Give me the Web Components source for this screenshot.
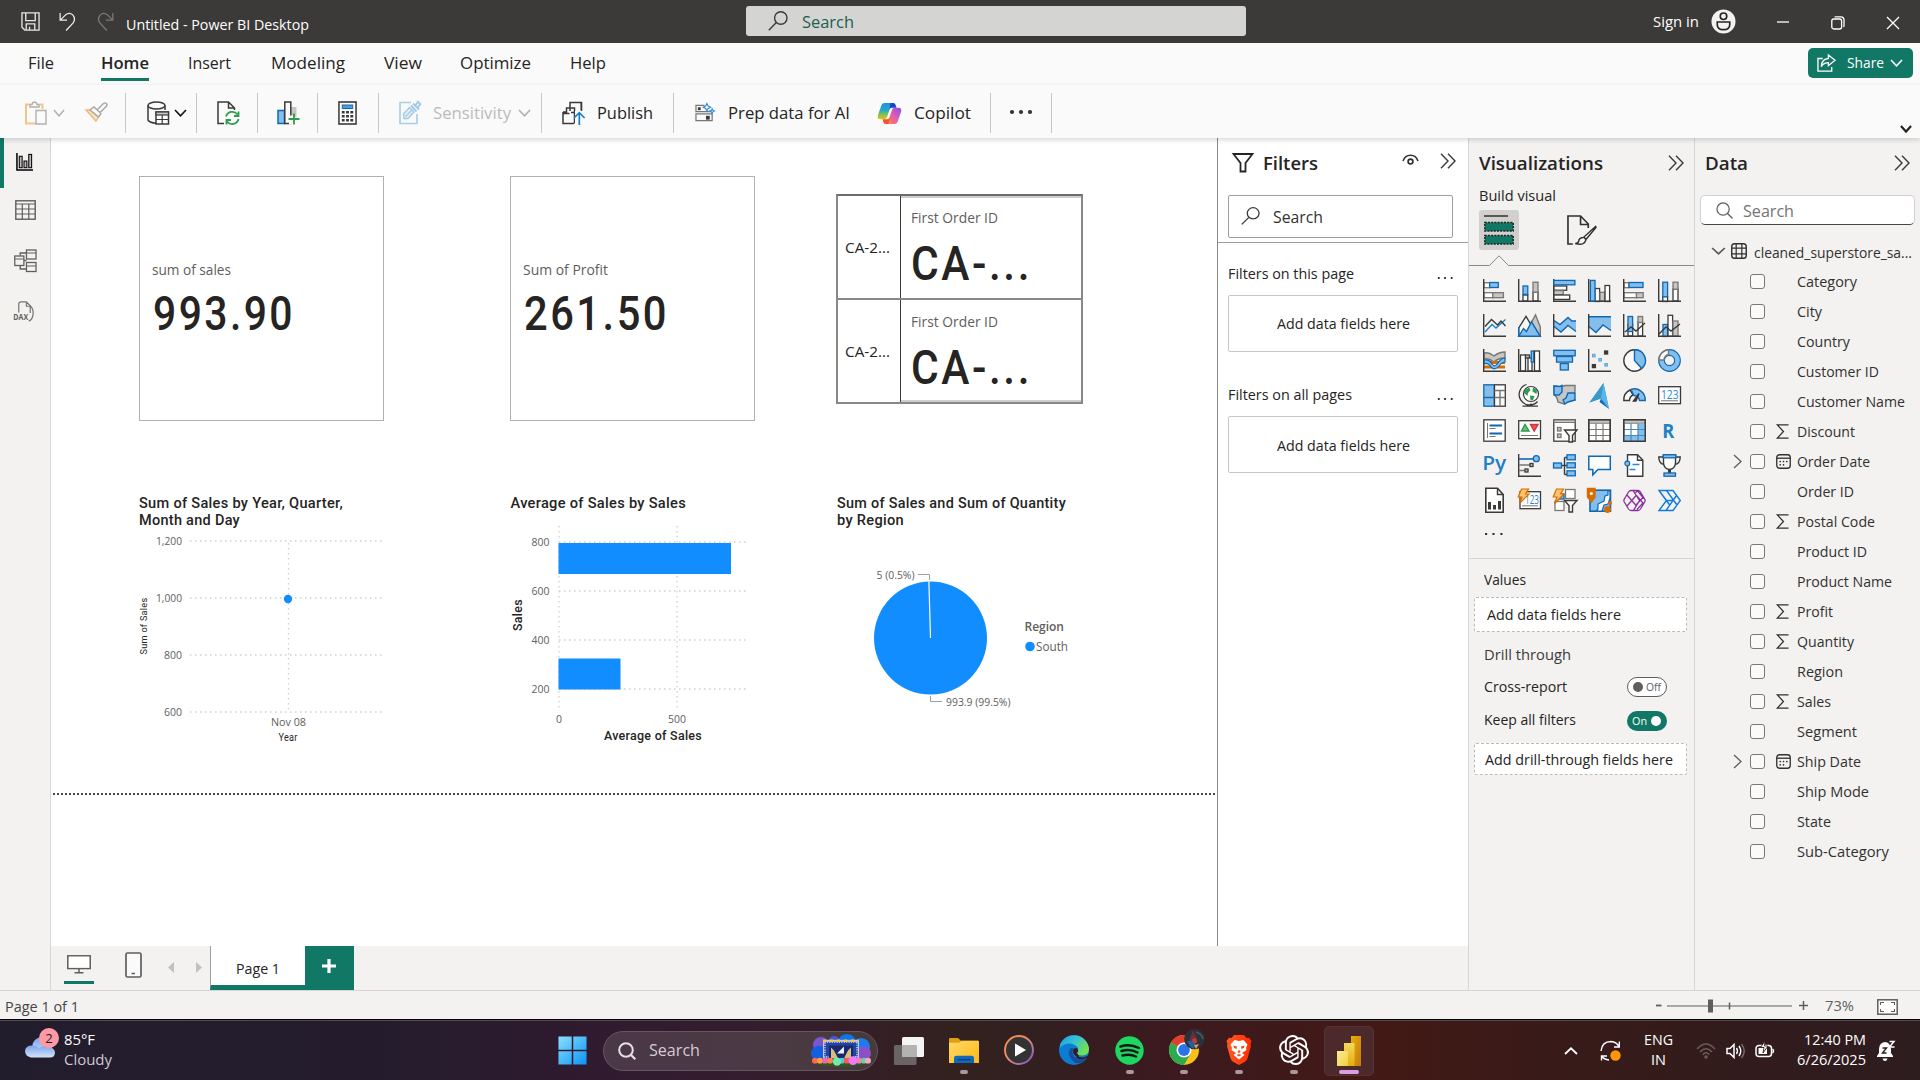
<!DOCTYPE html>
<html lang="en">
<head>
<meta charset="utf-8">
<title>Untitled - Power BI Desktop</title>
<style>
html,body{margin:0;padding:0;width:1920px;height:1080px;overflow:hidden;background:#f3f2f1;font-family:"Open Sans","Noto Sans",sans-serif;color:#252423}
</style>
</head>
<body>
<pbi-app></pbi-app>
<script>
const SANS = '"Open Sans","Noto Sans",sans-serif';
const DIN = 'Roboto,"Open Sans",sans-serif';

/* ---------- layout helpers ---------- */
const flow = (dir, start, items) => {
  let p = start;
  return items.map(([at, len, html, css = '']) => {
    const m = +(at - p).toFixed(2);
    p = at + len;
    return dir === 'x'
      ? `<div class="cx" style="margin-left:${m}px;width:${len}px;${css}">${html}</div>`
      : `<div class="cy" style="margin-top:${m}px;height:${len}px;${css}">${html}</div>`;
  }).join('');
};
const hrow = (start, items) => flow('x', start, items);
const vcol = (start, items) => flow('y', start, items);
const T = (text, w, size = 15, color = '#252423', weight = 400, din = false) =>
  `<ui-text w="${w}" size="${size}" color="${color}" weight="${weight}"${din ? ' din' : ''}>${text}</ui-text>`;
const I = (name, w, h = w) => `<ui-icon name="${name}" w="${w}" h="${h}"></ui-icon>`;
const BASE = `<style>:host{display:block;box-sizing:border-box}*{box-sizing:border-box}
.cx{flex:none;display:flex;align-items:center;height:100%}.cy{flex:none;display:flex;align-items:center}
.row{display:flex;align-items:center}.col{display:flex;flex-direction:column}</style>`;

/* ---------- icon shapes ---------- */
const K = '#3b3a39', BF = '#83beec', BS = '#1068b3', GF = '#c8c6c4', GS = '#797775';
const r = (x, y, w, h, f = 'none', s = K, sw = 1.3) => `<rect x="${x}" y="${y}" width="${w}" height="${h}" fill="${f}" stroke="${s}" stroke-width="${sw}"/>`;
const p = (d, s = K, f = 'none', sw = 1.4, x = '') => `<path d="${d}" stroke="${s}" fill="${f}" stroke-width="${sw}" ${x}/>`;
const AX = p('M.7 0V22.3H23', K, 'none', 1.4);
const tx = (x, y, s, f, w, t, l) => `<text x="${x}" y="${y}" font-family='${SANS.replace(/"/g, '')}' font-size="${s}" font-weight="${w}" fill="${f}"${l ? ` textLength="${l}" lengthAdjust="spacingAndGlyphs"` : ''}>${t}</text>`;
const bolt = p('M3.5 0H10.5L7.5 5H11L1.5 14.5L4 8H.2Z', '#d86c00', '#ffc36b', 1.2);

const VIZ = {
  v0: r(1, 3.7, 6, 5, '#fff', GS) + r(6.7, 3.5, 8.6, 5, BF, BS) + r(1, 13.7, 9, 5, '#fff', GS) + r(9.8, 13.7, 10.6, 5, GF, GS) + AX,
  v1: r(5, 16, 4.8, 6, '#fff') + r(5, 7, 4.8, 8.4, BF, BS) + r(15, 13, 5, 9, '#fff') + r(15, 3.2, 5, 10, GF, GS) + AX,
  v2: r(.7, 7, 13, 4.2, '#fff') + r(.7, 11.6, 9.5, 4.2, GF, GS) + r(.7, 16, 16, 4.4, '#fff') + p('M.7 0V22.3H23') + r(.9, 1.4, 21, 4.4, BF, BS),
  v3: r(7, 9.5, 4.6, 13, '#fff') + r(12, 13.3, 4.6, 9, GF, GS) + r(17, 6.5, 4.6, 16, '#fff') + p('M.7 0V22.3H23') + r(2.4, 1.4, 4.6, 20.6, BF, BS),
  v4: r(1, 3.7, 5, 5, '#fff', GS) + r(6, 3.5, 14, 5, BF, BS) + r(1, 13.7, 12.6, 5, '#fff', GS) + r(13.4, 13.7, 6.8, 5, GF, GS) + AX,
  v5: r(4.8, 17.5, 4.8, 5, '#fff') + r(4.8, 3.2, 4.8, 14.6, BF, BS) + r(15, 10, 5, 12, '#fff') + r(15, 3.2, 5, 7, GF, GS) + AX,
  v6: p('M2 18L9 10.5L13 14L22.5 5.5', '#1a86c8') + p('M2 12.5L8.5 5.5L14.5 11L18 7L22.5 12', K) + AX,
  v7: p('M11.5 12L17.5 .8L22.3 13V22Z', GS, GF) + p('M.7 14L8 2.4L14 12.5L8 22H.7Z', K, '#fafafa') + p('M.7 22.3L5.5 14.5L8.5 17.5L13.5 7.8L22.3 22.3Z', BS, BF) + p('M.7 13V22', BS),
  v8: `<path d="M1 6.500L7 10.500L15 3.500L19 7H23V17L15 11.500L8 18L1 12.500Z" fill="${BF}"/>` + p('M1 6.500L7 10.500L15 3.500L19 7H23', BS) + p('M1 12.500L8 18L15 11.500L23 17.500', BS) + AX,
  v9: `<path d="M1 3H23V17L15 11L8 18.500L1 13Z" fill="${BF}"/>` + p('M1 2.700H23M1 12.500L8 18.500L15 11L23 16.500', BS) + AX,
  v10: r(5, 10, 4.600, 12, '#fff') + r(5, 2.500, 4.600, 15, BF, BS) + r(15, 8, 4.600, 14, '#fff') + r(15, 2.500, 4.600, 6, GF, GS) + p('M2 18L8 13L13 17L22 9') + AX,
  v11: r(5, 10.500, 4.600, 12, BF, BS) + r(10, 1.300, 4.600, 21, '#fff') + r(15, 7, 5, 15, GF, GS) + p('M1 20L8 13L13 17L22 10') + AX,
  v12: p('M1 4Q6 3 11 7Q16 3 22 3V9Q15 9 11 13Q6 9 1 10Z', GS, GF) + p('M1 18H22M1 13.500H22', '#d86c00', 'none', 3) + p('M1 11Q6 10 9 15Q12 19 15 14Q18 9 22 9V13Q19 13 16 17Q12 22 8 18Q5 13 1 15Z', BS, BF, 1.200) + AX,
  v13: r(2.500, 6, 5, 16, '#fff') + r(7.500, 6, 4, 3, GF, K) + r(10, 9, 4, 13, '#fff') + r(13.200, 2, 2.600, 11, BF, BS) + r(16.500, 2, 5, 20, '#fff') + AX,
  v14: r(.8, 1.300, 21.400, 5.500, BF, BS) + r(3.500, 7.500, 16, 5.600, BF, BS) + r(7.300, 14.500, 8, 6.500, BF, BS),
  v15: AX + r(4.500, 5.300, 2.600, 2.600, BF, '#5fa8e0', 1) + r(10.800, 9.500, 2.600, 2.600, BF, '#5fa8e0', 1) + r(16.800, 14.500, 2.600, 2.600, BF, '#5fa8e0', 1) + r(16.600, 2, 3, 3, K) + r(4.400, 15.600, 3, 3, K),
  v16: `<circle cx="11.500" cy="11.500" r="10.700" fill="#fafafa" stroke="${K}" stroke-width="1.400"/>` + p('M11.500 .8A10.700 10.700 0 0 1 18.800 19.500L11.500 11.500Z', BS, BF),
  v17: `<circle cx="11.500" cy="11.500" r="8" fill="none" stroke="${BS}" stroke-width="6.800"/><circle cx="11.500" cy="11.500" r="8" fill="none" stroke="${BF}" stroke-width="4.600"/>` + p('M.8 11A10.700 10.700 0 0 1 10.500 .8V5.500A6 6 0 0 0 6 11Z', GS, '#fafafa'),
  v18: r(.8, .8, 10.500, 21.400, BF, BS) + p('M.8 13.500H11.300', BS) + r(11.500, .8, 10.800, 21.400, '#fafafa') + p('M11.500 6.500H22M11.500 13.500H22M17 6.500V13.500M17 13.500V22', GS),
  v19: `<circle cx="13" cy="10" r="7.500" fill="#fff" stroke="${K}" stroke-width="1.200"/>` + p('M7 6L11 3.500L12.500 6L10 9L9.500 12L6 9ZM15 3.500L19 6L18.500 10L14.500 7.500ZM12 11.500L16.500 12L15 16L12.500 16.500Z', 'none', '#2f9b4e') + p('M8.500 .5A10.500 10.500 0 1 0 19.500 17.500M13 19.500V22M4.500 22.200H20', K, 'none', 1.300),
  v20: p('M1 2L8 3L12 1.500H22V7L20 12L22 16L13 18L11 20L5 18L4 14L1 10Z', GS, GF) + p('M1 2L7 2.500L9 1.500V8L6 11H1ZM22 9L15 9L13 14L10 16L12 20L15 18L22 16Z', BS, BF),
  v21: `<path d="M15.500 -1L1.500 18.500L13 14.500L21 25Z" fill="#3a98cf"/><path d="M15.500 -1L13 14.500L1.500 18.500Z" fill="#3b9ac9"/><path d="M15.500 -1L21 25L13 14.500Z" fill="#57b6e8"/><path d="M21 25L11.500 18L13 14.500Z" fill="#0f6cbd"/>`,
  v22: p('M.8 16.500A10.700 11 0 0 1 7 6L10 11Q6.500 12.500 6.500 16.500Z', K, '#fafafa') + p('M8 5.500A10.700 11 0 0 1 22.200 16.500H16.500Q16 12.500 11 11.500Z', BS, BF) + p('M10.500 17L16 9.500L13 17Z', K, K),
  v23: r(.7, 2.700, 21.800, 17, '#fff') + tx(3, 15, 12.500, '#2b88d8', 400, '123', 17.500) + p('M3 16.800H20', GS, 'none', 1),
  v24: r(.8, .8, 21.400, 21.400, '#fff') + p('M4.500 4V19', GS, 'none', 1) + p('M6.500 6.500H19M6.500 14.500H19', '#1068b3', 'none', 2) + p('M6.500 9.500H12.500M6.500 17.500H12.500', GS, 'none', 1.200),
  v25: r(.7, 1.700, 21.800, 18, '#fff') + p('M3.500 12L7 5.500L11 12Z', '#2f9b4e', '#6cc07f') + p('M12.500 5.500H20L16.200 12Z', '#d13438', '#e8595c') + p('M3 16.500H20', GS, 'none', 1),
  v26: r(.8, .8, 21.400, 21.400, '#fff') + r(1, 1, 21, 2.500, GF, GS, 1) + r(4.500, 8.500, 3.500, 3.500, GF, GS) + r(4.500, 15, 3.500, 3.500, GF, GS) + p('M11.500 11H24L19.500 16.500V23H16V16.500Z', K, '#fafafa'),
  v27: r(.8, .8, 21.400, 21.400, '#fff') + r(1, 1, 21, 3.200, GF, GS, 1) + p('M8 4.500V22M15 4.500V22M1 10.500H22M1 16.500H22', GS, 'none', 1.200) + p('M.8 .8V22.200H22.200V.8Z'),
  v28: r(.8, .8, 21.400, 21.400, '#fff') + r(1, 1, 21, 3.200, GF, GS, 1) + `<path d="M15 4.500H22V22H1V16H15Z" fill="${BF}"/>` + p('M8 4.500V22M15 4.500V22M1 10.500H22M1 16.500H22', '#4a86bd', 'none', 1.200) + p('M.8 .8V22.200H22.200V.8Z'),
  v29: tx(4.200, 18.600, 20, '#2180c3', 700, 'R', 12),
  v30: tx(-.8, 16.200, 19.500, '#2180c3', 600, 'Py', 24),
  v31: AX + p('M1 5H15', BS, 'none', 1.600) + p('M1 11H12M1 16.500H7', GS, 'none', 1.400) + `<circle cx="18.300" cy="4.700" r="3" fill="${BF}" stroke="${BS}" stroke-width="1.300"/>` + r(12, 9.500, 3, 3, GF, K) + r(7, 15, 3, 3, GF, K),
  v32: p('M8 11.500H14M11.500 3.500V20.500M11.500 3.500H15M11.500 20.500H15', K) + r(.5, 9, 8, 5, BF, BS) + r(14, .8, 8.300, 5, BF, BS) + r(14, 8.800, 8.300, 5, BF, BS) + r(14, 16.800, 8.300, 5, BF, BS),
  v33: p('M.8 2.300H22.300V15.500H10L4.800 20.800V15.500H.8Z', BS, '#fff', 1.500),
  v34: p('M4.500 7V.8H14.500L19.800 6V22.200H4.500V12', K, '#fff') + p('M14.500 .8V6.200H19.800', K) + `<circle cx="4.300" cy="9.500" r="2.400" fill="${BF}" stroke="${BS}" stroke-width="1.200"/>` + p('M9.500 10.500H16.500M6.500 15.500H12.500', '#2b88d8', 'none', 1.300),
  v35: p('M5.500 3H.8Q.8 10 6.500 10.500M17.500 3H22.200Q22.200 10 16.500 10.500', K) + p('M5.500 1V9Q6 15 11.500 15.500Q17 15 17.500 9V1Z', K, '#fff') + p('M11.500 15.500V20', K, 'none', 3) + r(5.200, .8, 12.600, 3, BF, BS) + r(6, 19, 11.500, 3.200, BF, BS),
  v36: p('M2.800 -.700H14.500L20.200 5.500V23.200H2.800Z', K, '#fff', 1.600) + p('M14.500 -.500V5.500H20.200', K) + p('M6.500 20.500V13M11.500 20.500V16M16.500 20.500V12', K, 'none', 3),
  v37: r(2, 2.700, 20.500, 17, '#fff') + tx(7, 15, 12.500, '#2b88d8', 400, '123', 14) + p('M4 16.800H20', GS, 'none', 1) + bolt,
  v38: r(12.500, .5, 9.500, 9, '#fff', GS) + r(2, 12.500, 9, 9, '#fff', GS) + r(6, 5, 5, 5, BF, BS) + p('M11.500 11.500H24L19.500 16.500V23H16V16.500Z', K, '#fafafa') + bolt,
  v39: r(2, 1.200, 20.500, 21, BF, BS, 1.600) + p('M20 2L20 6L17 7L16 12L10 15V20L8 22H14L16 16L20 15L22 9V2Z', BS, '#fff', 1.200) + p('M3.300 13L-.5 8V-.5H7V8Z', '#d86c00', '#d86c00') + `<circle cx="3.300" cy="4.500" r="1.500" fill="#fff"/><circle cx="19.500" cy="20.500" r="3.400" fill="#d86c00"/><circle cx="22" cy="14" r="2" fill="#d86c00"/>`,
  v40: p('M8 1.500Q6.500 1.500 5.500 3L1.200 10.200Q.5 11.500 1.200 12.800L5.500 20Q6.500 21.500 8 21.500H15Q16.500 21.500 17.500 20L21.800 12.800Q22.500 11.500 21.800 10.200L17.500 3Q16.500 1.500 15 1.500ZM10 1.500L16.500 11.500L10.500 21.500M4 6L13.500 17M4 17L13.500 6M12.500 4Q14 1.500 15.500 3L20 8.500L13.500 15.500M13.500 6.500L20 14L14 20.500', '#8a2f9e', 'none', 1.300),
  v41: p('M1 1.500H15L22.300 11.500L15 21.500H1L8.500 11.500ZM8.500 1.500L19 16M1 1.500L12 16.500M8.500 11.500H15L8 21.500M15 11.500L18.500 6.500', '#0f7bdc', 'none', 1.400),
};

const GPT = 'M22.2819 9.8211a5.9847 5.9847 0 0 0-.5157-4.9108 6.0462 6.0462 0 0 0-6.5098-2.9A6.0651 6.0651 0 0 0 4.9807 4.1818a5.9847 5.9847 0 0 0-3.9977 2.9 6.0462 6.0462 0 0 0 .7427 7.0966 5.98 5.98 0 0 0 .511 4.9107 6.051 6.051 0 0 0 6.5146 2.9001A5.9847 5.9847 0 0 0 13.2599 24a6.0557 6.0557 0 0 0 5.7718-4.2058 5.9894 5.9894 0 0 0 3.9977-2.9001 6.0557 6.0557 0 0 0-.7475-7.0729zm-9.022 12.6081a4.4755 4.4755 0 0 1-2.8764-1.0408l.1419-.0804 4.7783-2.7582a.7948.7948 0 0 0 .3927-.6813v-6.7369l2.02 1.1686a.071.071 0 0 1 .038.052v5.5826a4.504 4.504 0 0 1-4.4945 4.4944zm-9.6607-4.1254a4.4708 4.4708 0 0 1-.5346-3.0137l.142.0852 4.783 2.7582a.7712.7712 0 0 0 .7806 0l5.8428-3.3685v2.3324a.0804.0804 0 0 1-.0332.0615L9.74 19.9502a4.4992 4.4992 0 0 1-6.1408-1.6464zM2.3408 7.8956a4.485 4.485 0 0 1 2.3655-1.9728V11.6a.7664.7664 0 0 0 .3879.6765l5.8144 3.3543-2.0201 1.1685a.0757.0757 0 0 1-.071 0l-4.8303-2.7865A4.504 4.504 0 0 1 2.3408 7.872zm16.5963 3.8558L13.1038 8.364 15.1192 7.2a.0757.0757 0 0 1 .071 0l4.8303 2.7913a4.4944 4.4944 0 0 1-.6765 8.1042v-5.6772a.79.79 0 0 0-.407-.667zm2.0107-3.0231l-.142-.0852-4.7735-2.7818a.7759.7759 0 0 0-.7854 0L9.409 9.2297V6.8974a.0662.0662 0 0 1 .0284-.0615l4.8303-2.7866a4.4992 4.4992 0 0 1 6.6802 4.66zM8.3065 12.863l-2.02-1.1638a.0804.0804 0 0 1-.038-.0567V6.0742a4.4992 4.4992 0 0 1 7.3757-3.4537l-.142.0805L8.704 5.459a.7948.7948 0 0 0-.3927.6813zm1.0976-2.3654l2.602-1.4998 2.6069 1.4998v2.9994l-2.5974 1.4997-2.6067-1.4997Z';

const ICONS = {
  ...VIZ,
  save: ['0 0 20 20', p('M1 1H19V19H4L1 16ZM5 1V9H15V1M5.500 19V12.500H14.500V19M9 19V15.500', '#e8e6e4', 'none', 1.400)],
  undo: ['0 0 18 20', p('M1.200 1V8.500H8.500M1.200 8.500L7 3Q11 0 14.500 3Q18 7 15 11.500L7.500 19.500', '#f0f0f0', 'none', 1.300)],
  redo: ['0 0 18 20', p('M16.800 1V8.500H9.500M16.800 8.500L11 3Q7 0 3.500 3Q0 7 3 11.500L10.500 19.500', '#7d7b79', 'none', 1.300)],
  magL: ['0 0 20 20', `<circle cx="12.800" cy="7" r="6.200" fill="none" stroke="currentColor" stroke-width="1.400"/>` + p('M8.300 11.500L.8 19.300', 'currentColor')],
  magR: ['0 0 18 18', `<circle cx="7.500" cy="7.500" r="6.500" fill="none" stroke="currentColor" stroke-width="1.300"/>` + p('M12.200 12.200L17.500 17.500', 'currentColor')],
  magT: ['0 0 18 18', `<circle cx="8" cy="8" r="6.800" fill="none" stroke="#e6e0e6" stroke-width="2"/>` + p('M13 13L17.300 17.300', '#e6e0e6', 'none', 2.200)],
  avatar: ['0 0 26 26', `<circle cx="13" cy="13" r="12.500" fill="#f3f2f1"/><circle cx="13" cy="7.500" r="3.400" fill="none" stroke="#252423" stroke-width="1.700"/>` + p('M6.500 13.500H19.500V16Q19.500 21.500 13 21.500Q6.500 21.500 6.500 16Z', '#252423', 'none', 1.700)],
  min: ['0 0 14 14', p('M1 7H13', '#fff', 'none', 1.300)],
  restore: ['0 0 14 14', `<rect x=".8" y="3" width="9.800" height="10" rx="2" fill="none" stroke="#fff" stroke-width="1.300"/>` + p('M3.500 1Q4 .8 5 .8H10Q13 .8 13 4V9.500Q13 10.500 12.500 11', '#fff', 'none', 1.300)],
  close: ['0 0 14 14', p('M1 1L13 13M13 1L1 13', '#fff', 'none', 1.300)],
  chev: ['0 0 13 8', p('M1 1L6.500 6.800L12 1', 'currentColor', 'none', 1.600)],
  chevB: ['0 0 13 8', p('M1 1L6.500 6.500L12 1', '#252423', 'none', 2.400)],
  chevR: ['0 0 9 15', p('M1 1L8 7.500L1 14', '#605e5c', 'none', 1.300)],
  dbl: ['0 0 16 16', p('M1 .8L8 8L1 15.200M8 .8L15 8L8 15.200', '#3b3a39', 'none', 1.400)],
  share: ['0 0 20 20', p('M6 5H1V19H15.500V14.500', '#fff') + p('M12 1L19 7L12 13V9.500Q7 9.500 4.500 14Q5 5.500 12 5Z', '#fff')],
  paste: ['0 0 22 24', p('M11 22.500H1V3.500H4.500M14.500 3.500H17.500V8', '#f3c489', 'none', 2) + p('M5 6V3.500H7Q7.500 1 9.500 1Q11.500 1 12 3.500H14V6Z', '#b3b0ad', '#fafafa') + p('M11 9.500H21V23H11Z', '#b3b0ad', '#fafafa')],
  brush: ['0 0 23 20', p('M1 8H5L13.500 15L11 19Z', '#f0b77f', '#fbe3c8') + p('M5 8L9 5L16 11.500L13.500 15ZM12 8L18.500 1.500Q20 .3 21.500 1.500Q22.500 3 21.500 4.200L15 10.500', '#a9a6a3', '#fafafa')],
  db: ['0 0 22 24', p('M18 9V4.500M1 4.500V19Q3 22 9 22.200', K, 'none', 1.500) + `<ellipse cx="9.500" cy="4.500" rx="8.500" ry="3.500" fill="none" stroke="${K}" stroke-width="1.500"/>` + r(9, 11, 12.500, 12, '#fff', K, 1.500) + r(9, 11, 12.500, 3, GF, K, 1.200) + p('M15.200 14V23M9 18.500H21.500', K, 'none', 1.200)],
  refresh: ['0 0 23 24', p('M7 22.500H1V1H11.500L17.500 7V9M11.500 1V7H17.500', K, 'none', 1.500) + p('M9 15.500A6.500 6.500 0 0 1 20.500 13.500M21.500 10.500V15H17M21.500 18A6.500 6.500 0 0 1 10 20.500M9.500 23.500V19H14', '#2f9b4e', 'none', 1.800)],
  addchart: ['0 0 23 24', r(13.500, 6, 6, 10, GF, 'none') + r(1, 9.500, 6.500, 13, BF, BS, 1.500) + r(7.800, 1, 6, 21.500, '#fafafa', K, 1.500) + `<rect x="12" y="14.500" width="4" height="9" fill="#fafafa"/>` + p('M17 12.500V23.500M11.500 18H22.500', '#2f9b4e', 'none', 1.800)],
  calc: ['0 0 20 24', r(1, 1, 18, 22, '#fff', K, 1.600) + r(4.500, 4, 11, 3.500, '#4ba0e0', BS, 1) + [4, 8.500, 13].map(x => [10, 14, 18].map(y => `<rect x="${x}" y="${y}" width="3" height="2.500" fill="${K}"/>`).join('')).join('')],
  sens: ['0 0 22 24', p('M12 1.500H1V22.500H18V13', '#a6cfe6', 'none', 1.700) + p('M4.500 13L10.500 6.500L15 11L9 17.500L5 17.500Z', '#9fcbe4', '#e2f0f8', 1.400) + p('M6.500 15.500L13 9', '#9fcbe4', 'none', 1.200) + p('M12 4.500L17.500 10.500M14 2.500L20 8.500M16 5L19 .8L21.300 3L18.500 7', '#9fcbe4', 'none', 1.900)],
  publish: ['0 0 23 24', p('M8 10V1.500H19.500V11M1 12.500H7.500M1 11V22.500H12M1 11H4.500V7H12.500V22.500M9 11.500H12.500', K, 'none', 1.500) + `<path d="M13 10H23V24H13Z" fill="#fafafa"/>` + p('M19.300 1.200V9', K, 'none', 1.500) + p('M17.300 24V12M12 17L17.300 11.700L22.600 17', '#1a80c8', 'none', 1.700)],
  prep: ['0 0 21 20', p('M10 2.500H1V9H13.500M1 11.500H18V18.500H1ZM1 9H18V7', GS, 'none', 1.300) + `<rect x="3" y="4.500" width="3" height="3" fill="${K}"/><rect x="11.500" y="13.500" width="4" height="4" fill="${K}"/>` + p('M12.500 .5L13.800 3.200L16.500 4.500L13.800 5.800L12.500 8.500L11.200 5.800L8.500 4.500L11.200 3.200ZM18 6L18.800 7.700L20.500 8.500L18.800 9.300L18 11L17.200 9.300L15.500 8.500L17.200 7.700Z', '#2b88d8', '#fafafa', 1.100)],
  copilot: ['0 0 24 24', `<defs><linearGradient id="a" x1="0" y1="0" x2="0" y2="1"><stop offset="0" stop-color="#1e8ee0"/><stop offset=".45" stop-color="#27a8c8"/><stop offset=".75" stop-color="#8cc63f"/><stop offset="1" stop-color="#f5b81c"/></linearGradient><linearGradient id="b" x1="1" y1="0" x2="0" y2="1"><stop offset="0" stop-color="#8a4fe0"/><stop offset=".45" stop-color="#d95bbd"/><stop offset=".75" stop-color="#fa6f6b"/><stop offset="1" stop-color="#ff9a55"/></linearGradient></defs><path d="M15.500 1H7.500Q5 1 4.200 3.500L.8 14Q0 18 3.500 18H7Q9 18 9.700 15.500L13 5Z" fill="url(#a)"/><path d="M13 1H15.500Q17.500 1 18 3.500L18.700 6H14Q12.500 6 12 8Z" fill="#1746c8"/><path d="M8.500 23H16.500Q19 23 19.800 20.500L23.200 10Q24 6 20.500 6H17Q15 6 14.300 8.500L11 19Z" fill="url(#b)"/><path d="M11 23H8.500Q6.500 23 6 20.500L5.300 18H10Q11.500 18 12 16Z" fill="#f0532f"/>`],
  dots3: ['0 0 24 6', `<circle cx="3" cy="3" r="2.100" fill="#323130"/><circle cx="12" cy="3" r="2.100" fill="#323130"/><circle cx="21" cy="3" r="2.100" fill="#323130"/>`],
  dotsS: ['0 0 18 4', `<rect x="1" y="1" width="2" height="2" fill="#323130"/><rect x="8" y="1" width="2" height="2" fill="#323130"/><rect x="15.500" y="1" width="2" height="2" fill="#323130"/>`],
  report: ['0 0 18 19', p('M1 0V18H18', '#000', 'none', 1.600) + r(3.500, 3.500, 3, 12, '#bbb', '#111', 1.200) + r(8.500, 8.500, 3, 7, '#bbb', '#111', 1.200) + r(13.500, 1.500, 3, 14, '#bbb', '#111', 1.200)],
  table: ['0 0 21 20', r(.8, .8, 19.400, 18.400, 'none', '#605e5c', 1.400) + p('M.8 4H20M.8 9H20M.8 14H20M7.300 4V19M13.800 4V19', '#605e5c', 'none', 1.200)],
  model: ['0 0 24 24', p('M6.500 6.500V4H13M6.500 16.500V20H13M10.500 11.500H13', '#605e5c') + r(.8, 7, 9.500, 9.500, '#f3f2f1', '#605e5c') + p('M.8 10H10M13 4H23M13 17H23', '#605e5c', 'none', 1.200) + r(13, 1, 10, 9, 'none', '#605e5c') + r(13, 13.500, 10, 9, 'none', '#605e5c')],
  dax: ['0 0 23 22', p('M6 12V3.500Q6 1 8.500 1H14L18 5V12.500M14 1V5.500H18M18 5Q21.500 8 21 14Q20.500 19.500 16.500 21', '#797775', 'none', 1.300) + tx(.3, 20.300, 8.500, '#605e5c', 700, 'DAX', 15.500)],
  funnel: ['0 0 22 20', p('M1.500 1H20.500L13.500 10V18.500H8.500V10Z', '#252423', 'none', 1.800)],
  eye: ['0 0 17 12', p('M1 7Q3 1.200 8.500 1.200Q14 1.200 16 7', '#323130', 'none', 1.500) + `<circle cx="8.500" cy="7.500" r="2.400" fill="none" stroke="#323130" stroke-width="1.700"/>`],
  build: ['0 0 30 30', p('M0 1H24', '#252423', 'none', 1.400) + `<rect x=".8" y="7.500" width="28.400" height="8.600" fill="#117865" stroke="#252423" stroke-width="1.500" stroke-dasharray="2 1.200"/><rect x=".8" y="20.500" width="28.400" height="8.600" fill="#117865" stroke="#252423" stroke-width="1.500" stroke-dasharray="2 1.200"/>`],
  format: ['0 0 31 30', p('M6 29H1V1H14L22 9V13M14 1V9.500H22', '#323130', 'none', 1.700) + p('M29.500 11.500L17.500 22L19.500 24.500L30 12.500ZM17 22.500Q12.500 22.500 12 26.500Q11.500 28.500 8.500 28.500Q18 31 19.500 25', '#323130', '#fafafa', 1.500)],
  tbl: ['0 0 17 17', `<rect x=".8" y=".8" width="15.400" height="15.400" rx="3" fill="none" stroke="#323130" stroke-width="1.500"/>` + p('M.8 5.500H16.200M.8 11.500H16.200M5.500 1V16M11.500 1V16', '#323130', 'none', 1.300)],
  sigma: ['0 0 14 16', p('M13.500 1H1.500L8 8L1.500 15H13.500', '#323130', 'none', 1.400)],
  cal: ['0 0 16 16', `<rect x=".8" y=".8" width="14.400" height="14.400" rx="3" fill="none" stroke="#323130" stroke-width="1.400"/>` + p('M.8 4.500H15.200', '#323130') + [[4.500, 8], [8, 8], [11.500, 8], [4.500, 11.500], [8, 11.500]].map(c => `<circle cx="${c[0]}" cy="${c[1]}" r=".9" fill="#323130"/>`).join('')],
  desktop: ['0 0 24 20', r(.8, .8, 22.400, 13.500, '#fff', '#605e5c', 1.500) + p('M12 14V18.500M7.500 18.700H16.500', '#605e5c', 'none', 1.500)],
  phone: ['0 0 17 26', `<rect x="1" y="1" width="15" height="24" rx="1.500" fill="#fafafa" stroke="#605e5c" stroke-width="1.700"/>` + p('M6.500 21.500H10', '#605e5c', 'none', 1.500)],
  triL: ['0 0 6 11', `<path d="M6 0V11L0 5.500Z" fill="#c2c0be"/>`],
  triR: ['0 0 6 11', `<path d="M0 0V11L6 5.500Z" fill="#c2c0be"/>`],
  plusW: ['0 0 14 14', p('M7 0V14M0 7H14', '#fff', 'none', 3.200)],
  zoomer: ['0 0 154 16', p('M0 7.500H5.500', '#605e5c', 'none', 1.800) + p('M11 8H136', '#605e5c', 'none', 1.100) + `<rect x="52" y="1.500" width="5" height="13" fill="#605e5c"/>` + p('M73.500 4.500V11.500M143 7.500H152M147.500 3V12', '#605e5c', 'none', 1.500)],
  fit: ['0 0 21 16', r(.8, .8, 19.400, 14.400, '#fff', '#605e5c', 1.500) + p('M3.500 6V3.500H7M14 3.500H17.500V6M17.500 10V12.500H14M7 12.500H3.500V10', '#605e5c', 'none', 1.100)],
  cloud: ['0 0 34 34', `<defs><linearGradient id="c" x1="0" y1="0" x2="0" y2="1"><stop offset="0" stop-color="#7ba4ea"/><stop offset="1" stop-color="#d4e4fc"/></linearGradient></defs><circle cx="17" cy="20" r="10" fill="url(#c)"/><path d="M6 30.500Q0 29 0 24Q.5 18.500 7 18.500Q12 18.500 14 21.500Q20 17 25 20Q30 21.500 30 26Q29.500 30.500 25 30.500Z" fill="url(#c)"/><circle cx="24" cy="11" r="10" fill="#ff99a4"/>` + tx(20.300, 15.800, 13, '#1d1a26', 400, '2', 7.500)],
  start: ['0 0 30 30', `<defs><linearGradient id="d" x1="0" y1="0" x2="1" y2="1"><stop offset="0" stop-color="#8be0ff"/><stop offset="1" stop-color="#0a93f5"/></linearGradient></defs><path d="M.5 .5H14.200V14.200H.5ZM15.800 .5H29.500V14.200H15.800ZM.5 15.800H14.200V29.500H.5ZM15.800 15.800H29.500V29.500H15.800Z" fill="url(#d)"/>`],
  party: ['0 0 62 34', `<g><ellipse cx="31" cy="30" rx="24" ry="3.500" fill="#2e5a1e"/><circle cx="11" cy="11" r="8" fill="#7a55d0"/><circle cx="9" cy="20" r="8" fill="#1260e0"/><circle cx="24" cy="8" r="6" fill="#4a55e0"/><circle cx="37" cy="9" r="9" fill="#0d74f0"/><circle cx="51" cy="13" r="9" fill="#1a7cf0"/><circle cx="54" cy="20" r="7" fill="#8b50c8"/><rect x="13" y="6" width="36" height="19" fill="#cfcbd0"/><rect x="14" y="8" width="34" height="17" fill="#2743a0"/><rect x="14.500" y="8" width="33" height="16" fill="none" stroke="#b9c6f0" stroke-width="2.600" stroke-dasharray="1.200 1.200"/><rect x="19" y="12" width="24" height="13" fill="#16286e"/><path d="M21 14L24 17L28 25H21ZM41 14L38 17L34 25H41Z" fill="#d8bd7c"/><path d="M27 20L34 13V20Z" fill="#eee"/><path d="M13 7H49" stroke="#ffc928" stroke-width="2.500" stroke-dasharray="3 4"/>` + [[5, '#ff6a4d'], [10, '#f9a04a'], [15, '#ee65b5'], [20, '#ff8350'], [32, '#5cc0d8'], [37, '#f55'], [49, '#ff7bbd'], [54, '#64d19b'], [58, '#f7a8c8']].map(c => `<circle cx="${c[0]}" cy="27.500" r="3" fill="${c[1]}"/>`).join('') + `<circle cx="27" cy="28.500" r="4.200" fill="#71eab0"/><circle cx="43" cy="27.500" r="4.500" fill="#f07af5"/></g>`],
  taskview: ['0 0 30 28', `<rect x="8" y="0" width="22" height="20" rx="1.500" fill="#f4f4f4"/><rect x="0" y="8" width="22.500" height="20" rx="1.500" fill="#6d6a69" opacity=".93"/><rect x="8" y="8" width="14.500" height="12" fill="#b5b3b2"/>`],
  folder: ['0 0 30 28', `<defs><linearGradient id="f" x1="0" y1="0" x2="1" y2="1"><stop offset="0" stop-color="#ffd968"/><stop offset="1" stop-color="#fbb917"/></linearGradient></defs><path d="M0 2Q0 1 1 1H9L12 4H29V8H0Z" fill="#dfa012"/><path d="M0 6H10L13 4H29Q30 4 30 5V27H0Z" fill="url(#f)"/><path d="M5 27V22Q5 19.500 7.500 19.500H22.500Q25 19.500 25 22V27Z" fill="#0f69b8"/><path d="M8.500 23.500H21.500" stroke="#0a3f78" stroke-width="1.300"/>`],
  media: ['0 0 30 30', `<defs><linearGradient id="m" x1="0" y1="0" x2="1" y2="1"><stop offset="0" stop-color="#ff8a3c"/><stop offset=".5" stop-color="#d98b7a"/><stop offset="1" stop-color="#7b4ed6"/></linearGradient></defs><circle cx="15" cy="15" r="14" fill="#333" stroke="url(#m)" stroke-width="2"/><path d="M11 8.500L22 15L11 21.500Z" fill="#fff"/>`],
  edge: ['0 0 30 30', `<defs><linearGradient id="e" x1="0" y1="0" x2="1" y2=".5"><stop offset="0" stop-color="#1f9de0"/><stop offset=".5" stop-color="#34c1d8"/><stop offset="1" stop-color="#72e052"/></linearGradient></defs><circle cx="15" cy="15" r="15" fill="#0c7cd0"/><path d="M1 10A15 15 0 0 1 30 14Q30 20.500 23 20.500Q18 20.500 18 18Q20 16 19 13Q16.500 9 11 8.500Q5 8 1 13Z" fill="url(#e)"/><path d="M12 13Q8 17 11.500 23Q15 29.500 22 28Q26 26.500 28 22.500Q22 25.500 17 23Q11.500 19.500 14.500 13.500Z" fill="#134f9c"/><path d="M18 20.500Q23 24 28.300 21Q31 20 30 14V24L28 22.500Q22 26 17 22.500Z" fill="#3a1a20"/><path d="M15 13.500Q12.500 17 16 20.500Q18 22 20 21L18 18Q20 16 18 13Z" fill="#3a1a20"/>`],
  spotify: ['0 0 29 29', `<circle cx="14.500" cy="14.500" r="14.200" fill="#1ed760"/><path d="M5.500 10.500Q15 7.500 24 12M6.500 15Q15 12.500 22.500 16.500M7.500 19.500Q15 17.500 21 20.500" stroke="#161616" stroke-width="2.500" fill="none" stroke-linecap="round"/>`],
  chrome: ['0 0 38 38', `<g transform="translate(0 8)"><circle cx="15" cy="15" r="15" fill="#fbc116"/><path d="M15 15L2 7.500A15 15 0 0 1 28 7.500H15Z" fill="#e33b2e"/><path d="M15 15L2 7.500A15 15 0 0 0 15 30L21.500 18.800Z" fill="#2da94f"/><circle cx="15" cy="15" r="7.500" fill="#fff"/><circle cx="15" cy="15" r="5.900" fill="#2a73e8"/></g><circle cx="25.500" cy="12" r="10.300" fill="#2c3138"/><path d="M24 3L29 14L22 20L20 14Z" fill="#6b2e3b"/><path d="M18 14H27L25 22Q20 20 18 14Z" fill="#205f9e"/><path d="M23 12L27 11L28 16H24Z" fill="#c23a3a"/><path d="M25 18L30 17L27 22Z" fill="#d79a66"/><path d="M27 5Q33 7 34 12" stroke="#4c5c64" fill="none" stroke-width="1.500"/>`],
  brave: ['0 0 26 30', `<defs><linearGradient id="g" x1="0" y1="0" x2="1" y2="0"><stop offset="0" stop-color="#ff5a22"/><stop offset="1" stop-color="#ff2b00"/></linearGradient></defs><path d="M8 0H18L20.500 3L23 2.800L25.500 6L24.500 9L25 11L21.500 23.500Q20.500 26 18.500 27L13 30L7.500 27Q5.500 26 4.500 23.500L1 11L1.500 9L.5 6L3 2.800L5.500 3Z" fill="url(#g)"/><path d="M13 6L17.500 5L21.500 9.500L20 13L20.500 15L16 18L18.500 20L13 24.500L7.500 20L10 18L5.500 15L6 13L4.500 9.500L8.500 5Z" fill="#fff"/><path d="M7.500 10.500L11 11.500L10.500 14L8 13ZM18.500 10.500L15 11.500L15.500 14L18 13ZM11.500 16.500L13 15L14.500 16.500L13 18.500ZM10.500 20L13 19L15.500 20L13 21.500Z" fill="#fb4a1c"/>`],
  gpt: ['0 0 24 24', `<path d="${GPT}" fill="#fff"/>`],
  pbi: ['0 0 24 30', `<defs><linearGradient id="h" x1="0" y1="0" x2="1" y2="1"><stop offset="0" stop-color="#e9ad0c"/><stop offset="1" stop-color="#c37a0f"/></linearGradient><linearGradient id="i" x1="0" y1="0" x2="0" y2="1"><stop offset="0" stop-color="#f6d85a"/><stop offset="1" stop-color="#e6ab10"/></linearGradient><linearGradient id="j" x1="0" y1="0" x2="1" y2="1"><stop offset="0" stop-color="#fbea9a"/><stop offset="1" stop-color="#f2cf3d"/></linearGradient></defs><rect x="14" y="0" width="10" height="30" fill="url(#h)"/><rect x="7" y="7" width="10.500" height="23" fill="url(#i)"/><rect x="0" y="15" width="11" height="15" fill="url(#j)"/>`],
  up: ['0 0 14 8', p('M1 7L7 1.300L13 7', '#fff', 'none', 1.800)],
  sync: ['0 0 21 21', p('M1 11Q2 1.500 11 1.500Q17 2 19 7M19.300 1.500V7H14M7 16H1.500V20.500M1.500 16Q4 19.500 9 20', '#fff', 'none', 1.400) + `<circle cx="15.500" cy="15.500" r="5.200" fill="#ff9500"/>`],
  wifi: ['0 0 20 16', p('M1 6Q10 -4 19 6M4 9Q10 2.500 16 9M6.700 11.700Q10 8 13.300 11.700', '#6e5a58', 'none', 1.500) + `<circle cx="10" cy="14" r="1.800" fill="#6e5a58"/>`],
  speaker: ['0 0 20 16', p('M1 5.500H4L8 1.500V14.500L4 10.500H1Z', '#fff', 'none', 1.500) + p('M10.500 5Q12.500 8 10.500 11M13 3Q16.500 8 13 13', '#fff') + p('M15.500 1Q21 8 15.500 15', '#7a6866')],
  battery: ['0 0 20 17', `<rect x="1" y="4.500" width="15.500" height="11" rx="3" fill="none" stroke="#fff" stroke-width="1.500"/><path d="M3.500 7H12V13H3.500Z" fill="#fff"/><path d="M17.500 8Q19.500 10 17.500 12" stroke="#fff" stroke-width="1.500" fill="none"/>` + p('M10 0L5.500 6.500H9L8 12L13 5H9.500Z', '#331a1a', '#fff', .9)],
  bell: ['0 0 18 20', `<path d="M8 1Q2 2 2 8V12L0 15V16H16V15L14 12V8Q13 1 8 1ZM5.500 17.500H10.500Q10 20 8 20Q6 20 5.500 17.500Z" fill="#fff"/>` + p('M5.500 7H9.500L5.500 12H9.500', '#331a1a', 'none', 1.400) + p('M12.500 .5H17L12.500 6H17.500', '#fff', 'none', 1.500)],
};

/* ---------- base + primitives ---------- */
class Base extends HTMLElement {
  connectedCallback() {
    if (this.shadowRoot) return;
    this.attachShadow({ mode: 'open' }).innerHTML = BASE + this.view();
    this.ready && this.ready();
  }
  a(n, d = '') { return this.getAttribute(n) ?? d; }
}
const def = (n, view, ready) => customElements.define(n, class extends Base { view() { return view(this); } ready() { ready && ready(this); } });

/* Text run that is condensed or widened to a given advance width. */
def('ui-text', e => `<style>:host{flex:none;width:${e.a('w')}px;white-space:nowrap;line-height:1.3;font-family:${e.hasAttribute('din') ? DIN : SANS};font-size:${e.a('size')}px;font-weight:${e.a('weight')};color:${e.a('color')}${e.hasAttribute('din') ? ';letter-spacing:.06em' : ''}}
span{display:inline-block;transform-origin:0 50%;white-space:nowrap}</style><span><slot></slot></span>`, e => {
  const s = e.shadowRoot.querySelector('span'), n = s.getBoundingClientRect().width;
  if (n) s.style.transform = `scaleX(${(+e.a('w') / n).toFixed(4)})`;
});
def('ui-icon', e => {
  const d = ICONS[e.a('name')], [vb, body] = Array.isArray(d) ? d : ['0 0 23 23', d];
  return `<style>:host{flex:none;width:${e.a('w')}px;height:${e.a('h')}px}svg{display:block;overflow:visible}</style><svg width="${e.a('w')}" height="${e.a('h')}" viewBox="${vb}" preserveAspectRatio="none">${body}</svg>`;
});

/* ---------- chrome ---------- */
def('title-bar', () => `<style>:host{height:43px;background:#3b3a38}.row{height:43px}</style>
<div class="row">${hrow(0, [
  [21, 19, I('save', 19, 19)], [59, 17, I('undo', 17, 19)], [97, 17, I('redo', 17, 19)],
  [126, 183, T('Untitled - Power BI Desktop', 183, 14.6, '#fff'), 'padding-top:5px'],
  [746, 500, hrow(746, [[768, 20, I('magL', 20), 'padding-bottom:1px'], [802, 52, T('Search', 52, 16.500, '#1d5f50'), 'padding-top:1px']]), 'height:30px;background:#d4d4d2;border-radius:3px;color:#3b3a39;margin-top:-1px'],
  [1653, 46, T('Sign in', 46, 14.500, '#fff'), 'padding-top:1px'], [1711, 25, I('avatar', 25)],
  [1776, 14, I('min', 14)], [1831, 14, I('restore', 14), 'padding-top:3px'], [1886, 14, I('close', 14), 'padding-top:3px']])}</div>`);

def('menu-bar', () => `<style>:host{height:42px;background:#fafafa}.row{height:40px}.b{display:flex;height:30px;width:105px;background:#117865;border-radius:5px;color:#fff}</style>
<div class="row">${hrow(0, [['File', 28, 26], ['Home', 101, 48], ['Insert', 188, 43], ['Modeling', 271, 74], ['View', 384, 38], ['Optimize', 460, 71], ['Help', 570, 36]].map(([t, x, w]) =>
  [x, w, T(t, w, 17, '#252423', t === 'Home' ? 600 : 400), t === 'Home' ? 'border-bottom:3px solid #117865;height:36px;padding-top:3px' : '']).concat([
  [1808, 105, `<div class="b">${hrow(1808, [[1817, 19, I('share', 19, 18)], [1847, 37, T('Share', 37, 15, '#fff')], [1890, 13, I('chev', 13, 8)]])}</div>`]]))}</div>`);

def('tool-bar', () => {
  const sep = x => [x, 1, '', 'height:40px;background:#c8c6c4'];
  const t = 'padding-top:1px';
  return `<style>:host{height:53px;background:#fafafa;box-shadow:0 2px 5px rgba(0,0,0,.16);position:relative;z-index:2}.row{height:56px}</style><div class="row">${hrow(0, [
  [25, 22, I('paste', 22, 24)], [53, 12, I('chev', 12, 8), 'color:#b3b0ad'], [85, 23, I('brush', 23, 20), 'padding-bottom:2px'], sep(125),
  [147, 22, I('db', 22, 24)], [174, 13, I('chev', 13, 8), 'color:#111'], sep(196), [217, 23, I('refresh', 23, 24)], sep(257),
  [277, 23, I('addchart', 23, 24)], sep(317), [338, 19, I('calc', 19, 24)], sep(378), [399, 22, I('sens', 22, 24)],
  [433, 78, T('Sensitivity', 78, 17, '#bdbbb9'), t], [518, 13, I('chev', 13, 8), 'color:#b3b0ad'], sep(541),
  [562, 23, I('publish', 23, 24)], [597, 56, T('Publish', 56, 17), t], sep(673), [695, 20, I('prep', 20, 19), 'padding-bottom:2px'],
  [728, 122, T('Prep data for AI', 122, 17), t], [877, 25, I('copilot', 25, 23)], [914, 57, T('Copilot', 57, 17), t], sep(990),
  [1009, 24, I('dots3', 24, 6), 'padding-bottom:2px'], sep(1051), [1900, 12, I('chevB', 12, 8), 'padding-top:31px']])}</div>`;
});

def('side-nav', () => `<style>:host{width:51px;background:#f3f2f1;border-right:1px solid #d8d6d4}.col{align-items:flex-start}.m{width:4px;height:50px;background:#117865}</style>
<div class="col">${vcol(138, [[138, 50, `<div class="m"></div><div style="padding:0 0 2px 12px">${I('report', 17, 18)}</div>`], [200, 20, I('table', 21, 20), 'padding-left:15px'], [249, 24, I('model', 23, 24), 'padding-left:14px'], [300, 22, I('dax', 22, 21), 'padding-left:13px']])}</div>`);

/* ---------- report visuals ---------- */
def('card-visual', e => `<style>:host{width:245px;height:245px;border:1px solid #b3b0ad;background:#fff}.col{padding-left:12px}</style>
<div class="col">${vcol(0, [[82, 22, T(e.a('label'), e.a('lw'), 14.400, '#605e5c')], [107, 60, T(e.a('value'), e.a('vw'), 49, '#252423', 500, true), 'padding-left:1px']])}</div>`);

def('multi-card', () => `<style>:host{width:247px;height:210px;border:2px solid #8a8886;border-top-color:#6f6d6b;background:#fff}
.r{display:flex;height:102px}.r+.r{border-top:2px solid #8a8886;height:104px}.l{width:63px;border-right:1px solid #3b3a39;display:flex;align-items:center;padding:0 0 0 7px}.v{flex:1;border-top:2px solid #d0cecc;padding-left:10px}.r+.r .v{border-top:0;border-bottom:2px solid #d0cecc}</style>
${[0, 1].map(i => `<div class="r"><div class="l">${T('CA-2...', 45, 14.600, '#252423', 500)}</div><div class="v col">${vcol(i ? 0 : 2, [[11, 22, T('First Order ID', 87, 14.400, '#605e5c')], [38, 60, T('CA-...', 121, 49, '#252423', 500, true)]])}</div></div>`).join('')}`);

const st = (x, y, t, l, s, f, o = {}) => `<text x="${x}" y="${y}" font-size="${s}" fill="${f}" textLength="${l}" lengthAdjust="spacingAndGlyphs" font-family='${(o.din ? DIN : SANS).replace(/"/g, '')}' font-weight="${o.w || 400}"${o.din ? ' letter-spacing=".3"' : ''} text-anchor="${o.a || 'start'}"${o.t ? ` transform="${o.t}"` : ''}>${t}</text>`;
const grid = d => `<path d="${d}" stroke="#d2d0ce" stroke-width="1.300" stroke-dasharray="1.500 3.500" fill="none"/>`;
const title = (x, y, t, l) => st(x, y, t, l, 15, '#252423', { din: 1, w: 500 });
const chart = (name, x, y, w, h, body) => def(name, () => `<style>:host{width:${w}px;height:${h}px}svg{display:block}</style><svg width="${w}" height="${h}" viewBox="${x} ${y} ${w} ${h}">${body}</svg>`);

chart('line-visual', 136, 490, 252, 260,
  title(139, 508, 'Sum of Sales by Year, Quarter,', 204) + title(139, 525, 'Month and Day', 101) +
  grid('M190 541H384M190 598H384M190 655H384M190 712H384M288.500 543V712') +
  [['1,200', 545, 26], ['1,000', 602, 26], ['800', 659, 18], ['600', 716, 18]].map(a => st(182, a[1], a[0], a[2], 11.500, '#605e5c', { a: 'end' })).join('') +
  `<circle cx="288" cy="599" r="4.200" fill="#118dff"/>` + st(288.500, 726, 'Nov 08', 35, 11.500, '#605e5c', { a: 'middle' }) +
  st(288, 741, 'Year', 19, 10, '#252423', { a: 'middle', din: 1 }) + st(0, 0, 'Sum of Sales', 57, 9.500, '#252423', { a: 'middle', din: 1, t: 'translate(147 626) rotate(-90)' }));
chart('bar-visual', 508, 490, 250, 260,
  title(510.500, 508, 'Average of Sales by Sales', 175.500) + grid('M559 542H748M559 591H748M559 640H748M559 689H748M559 526V711M677 526V711') +
  `<rect x="558.500" y="543" width="172.500" height="31" fill="#118dff"/><rect x="558.500" y="658.500" width="62" height="31" fill="#118dff"/>` +
  [['800', 546], ['600', 595], ['400', 644], ['200', 693]].map(a => st(549.500, a[1], a[0], 18, 11.500, '#605e5c', { a: 'end' })).join('') +
  st(559, 723, '0', 6, 11.500, '#605e5c', { a: 'middle' }) + st(677, 723, '500', 18, 11.500, '#605e5c', { a: 'middle' }) +
  st(653, 740, 'Average of Sales', 98, 13.500, '#252423', { a: 'middle', din: 1, w: 500 }) + st(0, 0, 'Sales', 32, 12.500, '#252423', { a: 'middle', din: 1, w: 500, t: 'translate(522 615) rotate(-90)' }));
chart('pie-visual', 834, 490, 252, 260,
  title(837, 508, 'Sum of Sales and Sum of Quantity', 229) + title(837, 525, 'by Region', 67) +
  `<circle cx="930.500" cy="638" r="56.500" fill="#118dff"/><path d="M930.500 638L928.900 581.500" stroke="#fff" stroke-width="1.200"/><path d="M918 574.500H929.500V580M930.500 696V701.500H942" stroke="#a19f9d" fill="none"/>` +
  st(876.500, 579, '5 (0.5%)', 38, 11.500, '#605e5c') + st(946, 706, '993.9 (99.5%)', 64.500, 11.500, '#605e5c') +
  st(1024.500, 631, 'Region', 39.500, 12, '#605e5c', { w: 600 }) + `<circle cx="1030" cy="646.500" r="4.800" fill="#118dff"/>` + st(1036, 651, 'South', 32, 12.500, '#605e5c'));

def('report-canvas', () => `<style>:host{width:1166px;height:808px;background:#fff;position:relative;overflow:hidden}.v{position:absolute}.d{position:absolute;left:2px;right:1px;top:655px;height:2px;background:repeating-linear-gradient(90deg,#484644 0 2px,#fff 2px 4px)}</style>
${[['card-visual label="sum of sales" lw="79" value="993.90" vw="142"', 'card-visual', 139, 176], ['card-visual label="Sum of Profit" lw="85" value="261.50" vw="145"', 'card-visual', 510, 176], ['multi-card', 'multi-card', 836, 194], ['line-visual', 'line-visual', 136, 490], ['bar-visual', 'bar-visual', 508, 490], ['pie-visual', 'pie-visual', 834, 490]].map(([o, c, x, y]) => `<div class="v" style="left:${x - 51}px;top:${y - 138}px"><${o}></${c}></div>`).join('')}<div class="d"></div>`);

/* ---------- panes ---------- */
def('filters-pane', () => {
  const box = 'width:230px;margin-left:10px;border:1px solid #c8c6c4;border-radius:2px;padding-left:48px';
  return `<style>:host{width:251px;height:808px;background:#fff;border-left:1px solid #8a8886}</style><div class="col">${vcol(138, [
  [150, 26, hrow(1218, [[1232, 22, I('funnel', 22, 20), 'padding-bottom:1px'], [1263, 55, T('Filters', 55, 18.500, '#252423', 600)], [1402, 17, I('eye', 17, 12), 'padding-bottom:6px'], [1440, 16, I('dbl', 16), 'padding-bottom:4px']])],
  [195, 43, hrow(1229, [[1241, 19, I('magL', 19, 18), 'padding-bottom:2px'], [1272.500, 50, T('Search', 50, 16, '#323130'), 'padding-top:1px']]), 'width:225px;margin-left:10px;border:1px solid #a19f9d;border-radius:2px;color:#3b3a39'],
  [242, 1, '', 'background:#a19f9d'],
  [262, 22, hrow(1218, [[1228, 126, T('Filters on this page', 126, 14.600)], [1437, 16, I('dotsS', 16, 4), 'padding-top:9px']])],
  [295, 57, T('Add data fields here', 133, 14.600), box],
  [383, 22, hrow(1218, [[1228, 124, T('Filters on all pages', 124, 14.600)], [1437, 16, I('dotsS', 16, 4), 'padding-top:9px']])],
  [416, 57, T('Add data fields here', 133, 14.600), box + ';padding-top:2px']])}</div>`;
});

def('toggle-pill', e => {
  const on = e.hasAttribute('on');
  return `<style>:host{width:40px;height:20px;border-radius:10px;display:flex;align-items:center;gap:3px;${on ? 'background:#117865;padding-left:5px' : 'background:#fff;border:1px solid #605e5c;padding-left:5px'}}i{width:10px;height:10px;border-radius:50%;background:${on ? '#fff' : '#605e5c'}}</style>${on ? T('On', 15, 11.500, '#fff') + '<i style="margin-left:1px"></i>' : '<i></i>' + T('Off', 15, 11.500, '#605e5c')}`;
});

def('viz-pane', () => {
  const well = 'width:213px;margin-left:5px;border:1px dashed #bdbbb9;background:#fff;border-radius:2px;';
  const L = t => 'padding-left:' + t + 'px';
  return `<style>:host{width:226px;height:852px;background:#f3f2f1;border-left:1px solid #d8d6d4}.g{display:grid;grid-template-columns:repeat(6,23px);gap:12px;margin-left:14px;height:233px;align-content:start}.sel{width:40px;height:40px;background:#d2d0ce;border-radius:3px;display:flex;align-items:center;justify-content:center}</style><div class="col">${vcol(138, [
  [150, 26, hrow(1469, [[1479, 124, T('Visualizations', 124, 18.500, '#252423', 600)], [1668, 16, I('dbl', 16), 'padding-bottom:1px']])],
  [185, 20, T('Build visual', 77, 14.600, '#252423', 500), L(10)],
  [210, 40, `<div class="sel">${I('build', 30)}</div><div style="margin-left:48px">${I('format', 30)}</div>`, L(10)],
  [255, 11, `<svg width="225" height="11" style="display:block"><path d="M0 10.500H20.500L30 .8L39.500 10.500H225" fill="none" stroke="#8a8886"/></svg>`],
  [279, 233, `<div class="g">${Object.keys(VIZ).map(k => I(k, 23)).join('')}</div>`],
  [532, 4, I('dotsS', 19, 4), L(15)], [558, 1, '', 'background:#d8d6d4'],
  [568, 22, T('Values', 42, 14.600), L(15)],
  [597, 35, T('Add data fields here', 134, 14.600), well + L(12) + ';padding-bottom:1px'],
  [643, 22, T('Drill through', 87, 14.600, '#3b3a39', 500), L(15)],
  [675, 22, hrow(1469, [[1484, 83, T('Cross-report', 83, 14.600)], [1627, 40, '<toggle-pill></toggle-pill>', 'padding-top:2px']])],
  [708, 24, hrow(1469, [[1484, 92, T('Keep all filters', 92, 14.600), 'padding-bottom:1px'], [1627, 40, '<toggle-pill on></toggle-pill>', 'padding-top:2px']])],
  [743, 32, T('Add drill-through fields here', 188, 14.600), well + L(10) + ';padding-top:1px']])}</div>`;
});

def('field-row', e => `<style>:host{height:30px;display:flex;align-items:center}.c{width:15px;height:15px;border:1px solid #797775;border-radius:3px;background:#fafafa}</style>${hrow(1695, [[1733, 9, e.hasAttribute('exp') ? I('chevR', 9, 15) : '', 'padding-bottom:1px'], [1750, 15, '<div class="c"></div>', 'padding-bottom:1px'], [1775.500, 16, e.a('k') ? I(e.a('k'), e.a('k') === 'cal' ? 15 : 13, 15) : '', 'padding-bottom:1px'], [1797, +e.a('w'), T(e.a('label'), e.a('w'), 14.600, '#323130'), 'padding-bottom:2px']])}`);

def('data-pane', () => {
  const F = [['Category', 60], ['City', 25], ['Country', 53], ['Customer ID', 82], ['Customer Name', 108], ['Discount', 58, 'sigma'], ['Order Date', 73, 'cal'], ['Order ID', 57], ['Postal Code', 78, 'sigma'], ['Product ID', 70], ['Product Name', 95], ['Profit', 36, 'sigma'], ['Quantity', 57, 'sigma'], ['Region', 46], ['Sales', 34, 'sigma'], ['Segment', 60], ['Ship Date', 64, 'cal'], ['Ship Mode', 72], ['State', 34], ['Sub-Category', 92]];
  return `<style>:host{width:226px;height:852px;background:#f3f2f1;border-left:1px solid #d8d6d4}</style><div class="col">${vcol(138, [
  [150, 26, hrow(1695, [[1705, 43, T('Data', 43, 18.500, '#252423', 600)], [1894, 16, I('dbl', 16), 'padding-bottom:1px']])],
  [195, 30, hrow(1701, [[1716, 17, I('magR', 17)], [1742.500, 51, T('Search', 51, 16.500, '#757371'), 'padding-top:1px']]), 'width:215px;margin-left:5px;border:1px solid #d1d1d1;border-bottom-color:#484644;border-radius:5px;background:#fff;color:#605e5c'],
  [237, 30, hrow(1695, [[1711, 15, I('chev', 15, 8), 'color:#605e5c;padding-bottom:2px'], [1731, 16, I('tbl', 16), 'padding-bottom:2px'], [1754, 158, T('cleaned_superstore_sa...', 158, 14.600, '#323130')]])],
  ])}${F.map(([t, w, k]) => `<field-row label="${t}" w="${w}"${k ? ` k="${k}"` : ''}${k === 'cal' ? ' exp' : ''}></field-row>`).join('')}</div>`;
});

def('page-tabs', () => `<style>:host{height:44px;width:1417px;background:#f3f2f1}.row{height:44px}</style><div class="row">${hrow(51, [
  [64, 30, I('desktop', 24, 19), 'height:29px;border-bottom:3px solid #117865;justify-content:center;align-items:flex-start;align-self:flex-start;margin-top:9px'],
  [125, 17, I('phone', 17, 26), 'padding-bottom:7px'], [168, 6, I('triL', 6, 11), 'padding-bottom:1px'], [196, 6, I('triR', 6, 11), 'padding-bottom:1px'],
  [210, 95, T('Page 1', 44, 14.800, '#252423', 500), 'background:#fff;border-left:1px solid #a19f9d;border-bottom:5px solid #117865;padding:7px 0 0 25px'],
  [305, 49, I('plusW', 14), 'background:#117865;justify-content:center;padding:0 1px 4px 0']])}</div>`);

def('status-bar', () => `<style>:host{height:30px;background:#f3f2f1;border-top:1px solid #d8d6d4;border-bottom:1px solid #000}.row{height:29px}</style><div class="row">${hrow(0, [
  [5, 74, T('Page 1 of 1', 74, 14.600, '#484644'), 'padding-top:2px'], [1656, 154, I('zoomer', 154, 16)], [1825, 29, T('73%', 29, 14.600, '#605e5c'), 'padding-bottom:1px'], [1877, 21, I('fit', 21, 16), 'padding-top:2px']])}</div>`);

/* ---------- taskbar ---------- */
def('task-bar', () => {
  const run = 'flex-direction:column;justify-content:flex-start;';
  const app = (x, w, n, h, top, ind = 1) => [x, w, `<div style="height:${49 - top}px;margin-top:${top}px">${I(n, w, h)}</div>${ind ? '<div class="n"></div>' : ''}`, run];
  return `<style>:host{height:60px;background:linear-gradient(90deg,#221d2d 0,#241c2d 20%,#2f1a30 30%,#341d2d 40%,#33211f 50%,#321f20 54%,#3b1a20 60%,#421915 72%,#371b19 82%,#2d1c1f 100%);border-top:1px solid #544b50}
.row{height:59px}.n{width:8px;height:4px;border-radius:2px;background:#a9999b}</style><div class="row">${hrow(0, [
  [25, 34, I('cloud', 34, 34), 'padding-top:6px;align-items:flex-start'],
  [64, 48, T('85°F', 31, 14.300, '#fff') + T('Cloudy', 48, 14.300, '#cfc9d0'), 'flex-direction:column;align-items:flex-start;justify-content:center;gap:1px'],
  [558, 29, I('start', 29)],
  [603, 275, hrow(604, [[618, 18, I('magT', 18)], [649, 51, T('Search', 51, 16, '#d5cbd3')], [810, 62, I('party', 62, 33)]]), 'height:40px;border-radius:20px;border:1px solid #66565f;background:linear-gradient(90deg,#4a3748,#4b3a44 60%,#463a3a)'],
  [894, 30, I('taskview', 30, 28)], app(949, 30, 'folder', 27, 16), app(1004, 30, 'media', 30, 14, 0), app(1059, 30, 'edge', 30, 14, 0), app(1115, 29, 'spotify', 29, 15),
  [1169, 38, `<div style="height:43px;margin-top:6px">${I('chrome', 38, 38)}</div><div class="n" style="margin-right:8px"></div>`, run],
  app(1226, 26, 'brave', 30, 14), app(1279, 30, 'gpt', 30, 14),
  [1324, 50, `<div style="margin-top:9px;height:34px">${I('pbi', 24, 30)}</div><div class="n" style="width:20px;background:#dd9fe2"></div>`, 'height:50px;border-radius:5px;border:1px solid #563235;background:#4c2a2c;flex-direction:column;align-items:center;justify-content:flex-start'],
  [1564, 14, I('up', 14, 8)], [1600, 21, I('sync', 21)],
  [1643, 31, T('ENG', 29, 14.300, '#fff') + T('IN', 15, 14.300, '#fff'), 'flex-direction:column;justify-content:center;gap:1px'],
  [1696, 20, I('wifi', 20, 16)], [1726, 20, I('speaker', 20, 16)], [1755, 20, I('battery', 20, 17), 'padding-bottom:2px'],
  [1796, 70, T('12:40 PM', 62, 14.300, '#fff') + T('6/26/2025', 69, 14.300, '#fff'), 'flex-direction:column;align-items:flex-end;justify-content:center;gap:1px'],
  [1877, 18, I('bell', 18, 20)]])}</div>`;
});

def('pbi-app', () => `<style>:host{width:1920px;height:1080px;display:flex;flex-direction:column;overflow:hidden}.main{display:flex;height:852px;flex:none}.mid{display:flex;flex-direction:column}.top{display:flex}</style>
<title-bar></title-bar><menu-bar></menu-bar><tool-bar></tool-bar>
<div class="main"><side-nav></side-nav><div class="mid"><div class="top"><report-canvas></report-canvas><filters-pane></filters-pane></div><page-tabs></page-tabs></div><viz-pane></viz-pane><data-pane></data-pane></div>
<status-bar></status-bar><task-bar></task-bar>`);
</script>
</body>
</html>
